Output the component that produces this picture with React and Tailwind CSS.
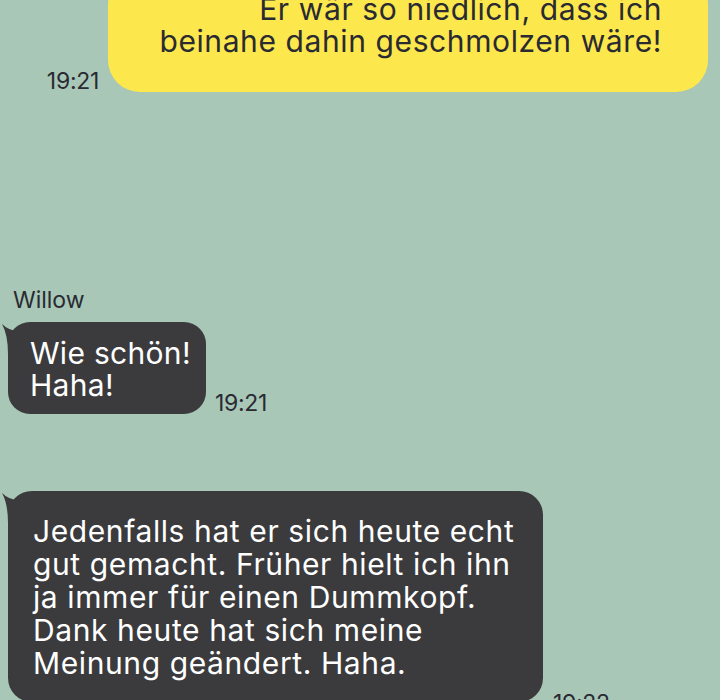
import React from "react";

function Tail() {
  return (
    <svg
      className="absolute left-[-6px] top-0"
      width="24"
      height="32"
      viewBox="0 0 24 32"
    >
      <path d="M0 2 Q 8 10 20 9 L 20 32 L 6 32 Q 6 13 0 2 Z" fill="#3b3b3d" />
    </svg>
  );
}

export default function App() {
  return (
    <div
      className="w-[720px] h-[700px] overflow-hidden bg-[#a8c7b7] text-[#2a2a33]"
      style={{ fontFamily: "Inter, 'Noto Sans', sans-serif" }}
    >
      <div className="flex items-end justify-end gap-[9px] pr-[12px] mt-[-27px]">
        <span className="text-[23px] leading-none mb-[-1px] tracking-[-0.3px]">19:21</span>
        <div className="w-[600px] rounded-[32px] bg-[#fce74c] pr-[46px] pt-[20px] pb-[35px] text-right text-[30px] leading-[32px] tracking-[0.6px]">
          <p>Er wär so niedlich, dass ich</p>
          <p>beinahe dahin geschmolzen wäre!</p>
        </div>
      </div>

      <div className="mt-[194px] pl-[13px] text-[23px] leading-[28px]">Willow</div>

      <div className="mt-[8px] flex items-end gap-[9px] pl-[8px]">
        <div className="relative w-[198px] rounded-[22px] bg-[#3b3b3d] pl-[22px] pt-[15px] pb-[13px] text-[30px] leading-[32px] tracking-[0.3px] text-white">
          <Tail />
          <p>Wie schön!</p>
          <p>Haha!</p>
        </div>
        <span className="text-[23px] leading-none mb-[-1px] tracking-[-0.3px]">19:21</span>
      </div>

      <div className="mt-[77px] flex items-end gap-[10px] pl-[8px]">
        <div className="relative w-[535px] rounded-[24px] bg-[#3b3b3d] pl-[25px] pt-[24px] pb-[22px] text-[30px] leading-[33px] tracking-[0.6px] text-white">
          <Tail />
          <p>Jedenfalls hat er sich heute echt</p>
          <p>gut gemacht. Früher hielt ich ihn</p>
          <p>ja immer für einen Dummkopf.</p>
          <p>Dank heute hat sich meine</p>
          <p>Meinung geändert. Haha.</p>
        </div>
        <span className="text-[23px] leading-none mb-[-13px] tracking-[-0.3px]">19:22</span>
      </div>
    </div>
  );
}
